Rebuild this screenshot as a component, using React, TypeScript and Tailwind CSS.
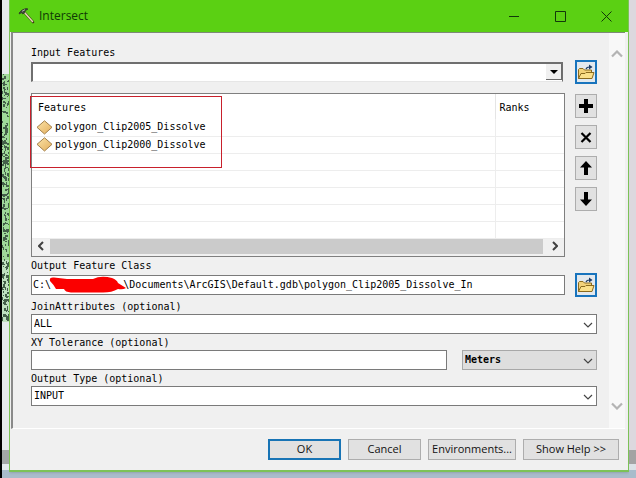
import type { ReactNode } from 'react';
import clsx from 'clsx';

const features = ['polygon_Clip2005_Dissolve', 'polygon_Clip2000_Dissolve'];
const emptyRows = [0, 1, 2, 3, 4];

// Small deterministic speckle for the map peeking out behind the dialog
const hash = (n: number) => {
  const v = Math.sin(n * 12.9898) * 43758.5453;
  return v - Math.floor(v);
};
const speckles = Array.from({ length: 280 }, (_, i) => ({
  x: Math.floor(hash(i + 1) * 7),
  y: 74 + Math.floor(hash(i + 501) * 246),
  w: 1 + (i % 2),
  h: 1 + (i % 3),
}));

function HammerIcon() {
  return (
    <svg width="18" height="18" viewBox="0 0 18 18" aria-hidden="true">
      <path d="M6 5 L15 15" stroke="#3c3a12" strokeWidth="2.6" strokeLinecap="round" />
      <path d="M6.5 5.5 L14.5 14.5" stroke="#e3dbb0" strokeWidth="1.6" strokeLinecap="round" />
      <path d="M1 6 L4 3 L8 1.5 L10 2 L7 4 L6.5 6 L4.5 7 L3.5 5.5 L1.5 7 Z" fill="#3f4a3c" stroke="#222" strokeWidth="0.6" />
      <path d="M4 4.3 L7 2.7" stroke="#c8d0c4" strokeWidth="0.8" />
    </svg>
  );
}

function FolderIcon() {
  return (
    <svg width="18" height="18" viewBox="0 0 18 18" aria-hidden="true">
      <path d="M1.5 15.5 V6.5 L2.5 5.5 H6 L7.5 7 H14.5 V15 Z" fill="#f3d27a" stroke="#8a6a1e" />
      <path d="M1.5 15.5 L4 10.5 H8 L9 9.5 H17 L15 15.5 Z" fill="#fbe08a" stroke="#8a6a1e" />
      <path d="M9 6 C9.5 4.5 10.5 4 12.5 4" stroke="#1d3c66" strokeWidth="1.2" fill="none" />
      <path d="M12 1.5 L15.5 4 L12 6.5 Z" fill="#1d3c66" />
    </svg>
  );
}

function PolygonIcon() {
  return (
    <svg width="17" height="15" viewBox="0 0 17 15" aria-hidden="true" className="shrink-0">
      <defs>
        <linearGradient id="diamond" x1="0" y1="0" x2="1" y2="1">
          <stop offset="0" stopColor="#fbe3a8" />
          <stop offset="1" stopColor="#e3ae5c" />
        </linearGradient>
      </defs>
      <path d="M8.5 0.8 L16 7.3 L8.5 14 L1 7.3 Z" fill="url(#diamond)" stroke="#a3804c" />
    </svg>
  );
}

function Chevron({ className, bold }: { className?: string; bold?: boolean }) {
  return (
    <svg width="10" height="6" viewBox="0 0 10 6" aria-hidden="true" className={className}>
      <path d="M1 1 L5 5 L9 1" fill="none" stroke="currentColor" strokeWidth={bold ? 2 : 1.2} />
    </svg>
  );
}

function BrowseButton({ label }: { label: string }) {
  return (
    <button
      type="button"
      aria-label={label}
      className="flex h-6 w-[22px] shrink-0 items-center justify-center border-2 border-[#1874bd] bg-[#e3e9ee]"
    >
      <FolderIcon />
    </button>
  );
}

function ToolButton({ label, children }: { label: string; children: ReactNode }) {
  return (
    <button
      type="button"
      aria-label={label}
      className="flex h-6 w-[22px] items-center justify-center border border-[#adadad] bg-[#e1e1e1]"
    >
      <svg width="14" height="14" viewBox="0 0 14 14" aria-hidden="true">
        {children}
      </svg>
    </button>
  );
}

function FieldLabel({ htmlFor, children }: { htmlFor: string; children: ReactNode }) {
  return (
    <label htmlFor={htmlFor} className="block h-4 leading-[18px]">
      {children}
    </label>
  );
}

function Dropdown({ id, value, label, muted }: { id: string; value: string; label?: string; muted?: boolean }) {
  return (
    <div className="relative">
      <select
        id={id}
        aria-label={label}
        defaultValue={value}
        className={clsx(
          'block h-5 w-full appearance-none rounded-none border px-0.5 leading-4 outline-none',
          muted ? 'border-[#a8a8a8] bg-[#dedede] font-bold' : 'border-[#7a7a7a] bg-white'
        )}
      >
        <option>{value}</option>
      </select>
      <Chevron className="pointer-events-none absolute top-2 right-1 text-[#444]" />
    </div>
  );
}

function FooterButton({ primary, wide, children }: { primary?: boolean; wide?: string; children: ReactNode }) {
  return (
    <button
      type="button"
      className={clsx(
        'flex h-[21px] items-center justify-center bg-[#e1e1e1] whitespace-nowrap',
        primary ? 'border-2 border-[#1874b5]' : 'border border-[#adadad]',
        wide ?? 'w-[73px]'
      )}
    >
      {children}
    </button>
  );
}

function TitleBar() {
  return (
    <header className="flex h-8 items-center bg-[#5bd013] pr-4 pl-2 text-[#0f3a05]">
      <HammerIcon />
      <h1 className="ml-[3px] flex-1 font-['Open_Sans',sans-serif] text-xs">Intersect</h1>
      <div className="flex items-center gap-[35px] text-[#12380a]">
        <button type="button" aria-label="Minimize">
          <svg width="11" height="11" viewBox="0 0 11 11">
            <path d="M0 5.5 H10" stroke="currentColor" />
          </svg>
        </button>
        <button type="button" aria-label="Maximize">
          <svg width="11" height="11" viewBox="0 0 11 11">
            <path d="M0.5 0.5 H10.5 V10.5 H0.5 Z" stroke="currentColor" fill="none" />
          </svg>
        </button>
        <button type="button" aria-label="Close">
          <svg width="11" height="11" viewBox="0 0 11 11">
            <path d="M0.5 0.5 L10.5 10.5 M10.5 0.5 L0.5 10.5" stroke="currentColor" />
          </svg>
        </button>
      </div>
    </header>
  );
}

function FeatureList() {
  return (
    <div className="relative flex-1 border border-[#7f7f7f] bg-white">
      <table className="w-full table-fixed border-collapse text-left">
        <thead>
          <tr className="h-[25px]">
            <th className="border-r border-[#e5e5e5] pt-0.5 pb-0 pl-1.5 font-normal">Features</th>
            <th className="w-[69px] pt-0.5 pb-0 pl-1 font-normal">Ranks</th>
          </tr>
        </thead>
        <tbody>
          {features.map((name) => (
            <tr key={name} className="h-[17px] border-b border-[#ededed]">
              <td className="border-r border-[#ededed] p-0 pl-1">
                <div className="flex h-4 items-center gap-0.5">
                  <PolygonIcon />
                  {name}
                </div>
              </td>
              <td />
            </tr>
          ))}
          {emptyRows.map((row) => (
            <tr key={row} className="h-[17px] border-b border-[#ededed]">
              <td className="border-r border-[#ededed]" />
              <td />
            </tr>
          ))}
        </tbody>
      </table>
      <div className="flex h-[17px] items-center bg-[#f0f0f0] pb-0.5 text-[#404040]">
        <Chevron bold className="mx-1 rotate-90" />
        <div className="h-[15px] flex-1 bg-[#cbcbcb]" />
        <Chevron bold className="mr-1 ml-[7px] -rotate-90" />
      </div>
      {/* Highlight around the two inputs */}
      <div className="pointer-events-none absolute top-0.5 -left-0.5 h-[72px] w-48 border border-[#c8202c]" />
    </div>
  );
}

function Form() {
  return (
    <form className="flex-1 pt-[11px] pr-3 pl-[18px] font-['DejaVu_Sans_Mono','Liberation_Mono',monospace] text-[10px] leading-4">
      <FieldLabel htmlFor="input-features">Input Features</FieldLabel>
      <div className="flex items-center gap-3">
        <div className="relative flex-1">
          <select
            id="input-features"
            className="block h-5 w-full appearance-none rounded-none border-t-2 border-r border-b border-l-2 border-[#6f6f6f] border-b-[#e6e6e6] bg-white outline-none"
          >
            <option></option>
          </select>
          <span className="pointer-events-none absolute top-0.5 right-px flex h-4 w-4 items-center justify-center border-r border-b border-[#6b6b6b] bg-[#f0f0f0]">
            <svg width="8" height="4" viewBox="0 0 8 4" aria-hidden="true">
              <path d="M0 0 H8 L4 4 Z" fill="#000" />
            </svg>
          </span>
        </div>
        <BrowseButton label="Browse input features" />
      </div>

      <div className="mt-[9px] flex gap-2.5">
        <FeatureList />
        <div className="flex flex-col gap-[7px] pt-px">
          <ToolButton label="Add">
            <path d="M7 0 V14 M0 7 H14" stroke="#000" strokeWidth="4" />
          </ToolButton>
          <ToolButton label="Remove">
            <path d="M2.5 3 L11.5 12 M11.5 3 L2.5 12" stroke="#000" strokeWidth="2.2" />
          </ToolButton>
          <ToolButton label="Move up">
            <path d="M7 0 L13 6.5 H9 V14 H5 V6.5 H1 Z" fill="#000" />
          </ToolButton>
          <ToolButton label="Move down">
            <path d="M7 14 L13 7.5 H9 V0 H5 V7.5 H1 Z" fill="#000" />
          </ToolButton>
        </div>
      </div>

      <FieldLabel htmlFor="output-class">Output Feature Class</FieldLabel>
      <div className="flex items-center gap-2.5">
        <div className="relative flex-1">
          <textarea
            id="output-class"
            rows={1}
            wrap="off"
            defaultValue={'C:\\            \\Documents\\ArcGIS\\Default.gdb\\polygon_Clip2005_Dissolve_In'}
            className="block h-5 w-full resize-none overflow-hidden border border-[#7a7a7a] bg-white px-px leading-[18px] outline-none"
          />
          {/* Marker stroke hiding the user name */}
          <svg width="78" height="18" viewBox="0 0 78 18" aria-hidden="true" className="absolute top-px left-[18px]">
            <path
              d="M1 5 Q0 1 5 1.500 L18 3 H44 Q52 -1 63 2 Q68 4 69 7 L77 12 Q74 14 69 13 Q62 17 52 16.500 H22 Q16 16 15 13 L7 13 Q5 9 1 5 Z"
              fill="#fb0000"
            />
          </svg>
        </div>
        <BrowseButton label="Browse output feature class" />
      </div>

      <div className="pt-px">
        <FieldLabel htmlFor="join-attributes">JoinAttributes (optional)</FieldLabel>
        <Dropdown id="join-attributes" value="ALL" />
      </div>

      <FieldLabel htmlFor="xy-tolerance">XY Tolerance (optional)</FieldLabel>
      <div className="flex gap-[15px]">
        <input id="xy-tolerance" type="text" className="h-5 min-w-0 flex-1 border border-[#7a7a7a] bg-white px-1 outline-none" />
        <div className="w-[135px]">
          <Dropdown id="tolerance-unit" value="Meters" label="Tolerance unit" muted />
        </div>
      </div>

      <FieldLabel htmlFor="output-type">Output Type (optional)</FieldLabel>
      <Dropdown id="output-type" value="INPUT" />
    </form>
  );
}

export default function App() {
  return (
    <div className="flex min-h-screen bg-[#a9bccb]">
      <div className="w-0.5 bg-black" />
      <div className="relative w-[7px] bg-[#e4eaec]">
        <svg width="7" height="478" viewBox="0 0 7 478" aria-hidden="true" className="absolute top-0 left-0">
          <rect x="0" y="74" width="7" height="186" fill="#9fd99a" />
          <rect x="0" y="260" width="7" height="62" fill="#bfe0c0" />
          {speckles.map((s, i) => (
            <rect key={i} x={s.x} y={s.y} width={s.w} height={s.h} fill="#44604a" />
          ))}
          <rect x="0" y="450" width="7" height="14" fill="#a3a7a6" />
          <rect x="0" y="470" width="7" height="8" fill="#a9bccb" />
        </svg>
      </div>

      <main className="flex min-w-0 flex-1 flex-col pb-1.5">
        <div className="flex flex-1 flex-col border-r border-b-2 border-l border-[#7cc257] bg-[#f0f0f0] shadow-sm">
          <TitleBar />
          <div className="mr-[3px] ml-px flex border-t border-b border-l-2 border-t-[#7d8a78] border-b-white border-l-[#8a8a8a]">
            <div className="flex flex-1 pb-[22px]">
              <Form />
            </div>
            <div className="flex w-4 flex-col items-center justify-between bg-[#f8f8f8] pt-[17px] pb-[18px] text-[#b4b4b4]">
              <svg width="12" height="8" viewBox="0 0 12 8" aria-hidden="true">
                <path d="M1 6.500 L6 1.500 L11 6.500" fill="none" stroke="currentColor" strokeWidth="2.2" />
              </svg>
              <svg width="12" height="8" viewBox="0 0 12 8" aria-hidden="true">
                <path d="M1 1.500 L6 6.500 L11 1.500" fill="none" stroke="currentColor" strokeWidth="2.2" />
              </svg>
            </div>
          </div>
          <footer className="flex justify-end gap-[7px] pt-2.5 pr-[9px] pb-2.5 font-['Open_Sans',sans-serif] text-[11px] text-[#111]">
            <FooterButton primary>OK</FooterButton>
            <FooterButton>Cancel</FooterButton>
            <FooterButton wide="w-[88px]">Environments...</FooterButton>
            <FooterButton wide="w-24">Show Help &gt;&gt;</FooterButton>
          </footer>
        </div>
      </main>

      <div className="flex w-[7px] flex-col bg-[#dcd8de]">
        <div className="mt-auto h-3.5 bg-[#a3a3a3]" />
        <div className="h-1.5 bg-[#dbe2e6]" />
        <div className="h-2 bg-[#a9bccb]" />
      </div>
    </div>
  );
}
